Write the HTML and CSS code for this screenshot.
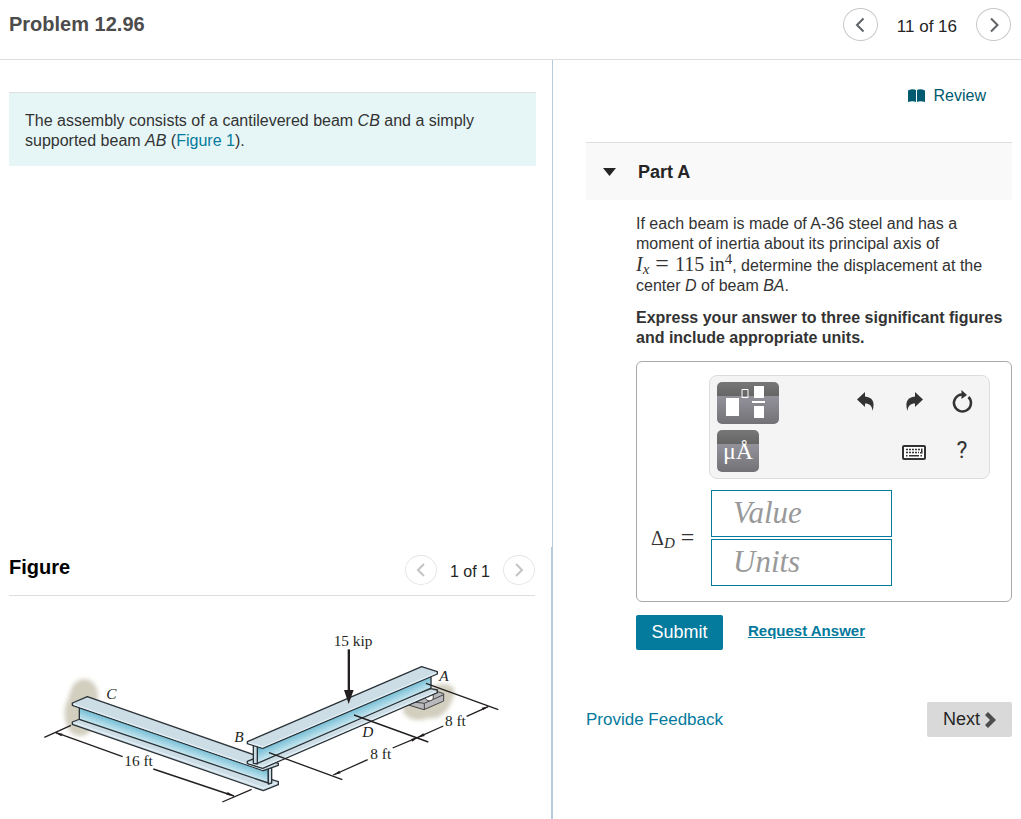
FILE: index.html
```html
<!DOCTYPE html>
<html lang="en">
<head>
  <meta charset="UTF-8" />
  <meta name="viewport" content="width=device-width, initial-scale=1.0" />
  <title>Problem 12.96</title>
  <link rel="stylesheet" href="styles.css">
</head>
<body>
  <header class="top-bar">
    <h1>Problem 12.96</h1>
    <nav class="pager">
      <button class="round-btn" aria-label="Previous problem">
        <svg width="12" height="16" viewBox="0 0 12 16"><path d="M9.5 1.5 3 8l6.500 6.500"/></svg>
      </button>
      <span>11 of 16</span>
      <button class="round-btn" aria-label="Next problem">
        <svg width="12" height="16" viewBox="0 0 12 16"><path d="M3 1.500 9.500 8 3 14.500"/></svg>
      </button>
    </nav>
  </header>

  <main class="columns">
    <section class="left">
      <p class="intro">The assembly consists of a cantilevered beam <i>CB</i> and a simply supported beam <i>AB</i> (<a href="#figure">Figure 1</a>).</p>

      <div class="figure-pane" id="figure">
        <div class="figure-head">
          <h2>Figure</h2>
          <div class="pager small">
            <button class="round-btn" aria-label="Previous figure" disabled>
              <svg width="12" height="16" viewBox="0 0 12 16"><path d="M9 2 3 8l6 6"/></svg>
            </button>
            <span>1 of 1</span>
            <button class="round-btn" aria-label="Next figure" disabled>
              <svg width="12" height="16" viewBox="0 0 12 16"><path d="M3 2l6 6-6 6"/></svg>
            </button>
          </div>
        </div>

        <svg class="drawing" viewBox="27 -72 1578 669" role="img" aria-label="Beams CB and AB">
          <defs>
            <linearGradient id="webCB" gradientUnits="userSpaceOnUse" x1="520" y1="350" x2="506" y2="392">
              <stop offset="0" stop-color="#5fb2cc"/>
              <stop offset="1" stop-color="#d3edf5"/>
            </linearGradient>
            <linearGradient id="webAB" gradientUnits="userSpaceOnUse" x1="1050" y1="264" x2="1068" y2="306">
              <stop offset="0" stop-color="#62b3cd"/>
              <stop offset="1" stop-color="#d3edf5"/>
            </linearGradient>
            <filter id="soft" x="-20%" y="-20%" width="140%" height="140%">
              <feGaussianBlur stdDeviation="6"/>
            </filter>
          </defs>

          <!-- wall at C and ground at A -->
          <path class="ground" filter="url(#soft)" d="M212 213c12-48 72-50 82 6l-2 40-22 75c-12 18-50 20-62-4-18-22-18-70-4-92z"/>
          <path class="ground" filter="url(#soft)" d="M1208 262l100-68c60-10 62 20 48 48-14 36-40 58-72 52-28 14-78 4-76-32z"/>

          <!-- beam CB -->
          <g class="beam">
            <path class="flange" d="M217 306l23-9 595 188v9l-45 18-573-199z"/>
            <path class="edge" d="M221 308l569 196 41-16"/>
            <path d="M238 258v40l567 191v-50z" fill="url(#webCB)"/>
            <path class="flange" d="M805 436v56l10-3v-60z"/>
            <path class="flange" d="M217 249l45-19 573 200v6l-45 16-573-196z"/>
            <path class="edge" d="M221 253l568 195"/>
          </g>

          <!-- support at A -->
          <g class="support">
            <path d="M1225 249l70-40 36 12v22l-59 26-47-14z"/>
            <path d="M1273 268v-18l58-26M1273 250l-46-6" fill="none"/>
            <path class="pin" d="M1276 235c5 10 20 10 24-1l-1-16-22 10z"/>
          </g>

          <!-- beam AB -->
          <g class="beam">
            <path class="flange" d="M742 424l20-8 530-210 20 4v8l-524 227-46-14z"/>
            <path class="edge" d="M746 427l42 13 520-225"/>
            <path d="M772 376v54l521-226v-40z" fill="url(#webAB)"/>
            <path class="flange" d="M760 372v58l12 2v-58z"/>
            <path class="flange" d="M742 365l523-225 47 15v7l-524 223-46-14z"/>
            <path class="edge" d="M746 368l42 13 520-222"/>
          </g>

          <!-- dimension lines -->
          <g class="dims">
            <path d="M213 316l-80 36M168 338l200 72M460 447l242 81M755 508l-88 38"/>
            <path d="M807 398l220 81M1062 285l223 81M1278 190l217 79"/>
            <path d="M1000 465l103-46M1178 384l74-31M1252 353l78-35M1400 289l65-29"/>
          </g>
          <g class="tips">
            <path d="M165 338l23 3-4 8zM704 529l-21-13-4 8zM998 466l20-14 4 8zM1254 352l-21 5 4 8zM1250 354l20-14 4 8zM1466 259l-21 4 4 8z"/>
            <path d="M1032 210h29l-15 42z"/>
            <path d="M1043 88h7v125h-7z"/>
          </g>

          <g class="labels">
            <text x="1001" y="77">15 kip</text>
            <text x="373" y="439">16 ft</text>
            <text x="1111" y="416">8 ft</text>
            <text x="1335" y="318">8 ft</text>
            <text class="pt" x="319" y="236">C</text>
            <text class="pt" x="703" y="367">B</text>
            <text class="pt" x="1087" y="352">D</text>
            <text class="pt" x="1318" y="184">A</text>
          </g>
        </svg>
      </div>
    </section>

    <section class="right">
      <a class="review" href="#">
        <svg width="17" height="14" viewBox="0 0 17 14"><path d="M0 1.500C3 0 6 0 8 1v12c-2-1-5-1-8 0zM9 1c2-1 5-1 8 .5V13c-3-1-6-1-8 0z"/></svg>
        Review
      </a>

      <button class="part-head" aria-expanded="true">
        <svg width="13" height="8" viewBox="0 0 13 8"><path d="M0 0h13L6.500 8z"/></svg>
        Part A
      </button>

      <div class="part-body">
        <p>If each beam is made of A-36 steel and has a moment of inertia about its principal axis of <span class="math"><i>I</i><sub><i>x</i></sub><span class="op">=</span>115 in<sup>4</sup></span>, determine the displacement at the center <i>D</i> of beam <i>BA</i>.</p>
        <p class="hint">Express your answer to three significant figures and include appropriate units.</p>

        <div class="answer-box">
          <div class="toolbar">
            <div class="tool-row">
              <button class="pad-btn wide" aria-label="Templates">
                <svg width="62" height="42" viewBox="0 0 62 42">
                  <path d="M9 16h13v18H9zM37 4h10v12H37zM37 24h10v12H37zM35 19h13v2H35z" fill="#fff"/>
                  <path d="M25 7.500h6v8h-6z" fill="none" stroke="#fff"/>
                </svg>
              </button>
              <div class="tool-icons">
                <button class="icon-btn" aria-label="Undo">
                  <svg width="24" height="24" viewBox="0 0 24 24"><path d="M3 9.500 11 2v4.500c7 .5 10.500 5 7.500 14.500-.5-5.500-3-7.500-7.500-7.500V17z"/></svg>
                </button>
                <button class="icon-btn" aria-label="Redo">
                  <svg width="24" height="24" viewBox="0 0 24 24"><path d="M21 9.500 13 2v4.500C6 7 2.500 11.500 5.500 21c.5-5.500 3-7.500 7.500-7.500V17z"/></svg>
                </button>
                <button class="icon-btn" aria-label="Reset">
                  <svg width="24" height="24" viewBox="0 0 24 24"><path d="M18.500 7a8.500 8.500 0 1 1-6.500-2.500" fill="none" stroke="#333" stroke-width="2.500"/><path d="M11.500 0 17 5l-5.500 4z"/></svg>
                </button>
              </div>
            </div>
            <div class="tool-row">
              <button class="pad-btn" aria-label="Units">μÅ</button>
              <div class="tool-icons">
                <button class="icon-btn" aria-label="Keyboard">
                  <svg width="24" height="24" viewBox="0 0 24 24">
                    <rect x="1" y="8" width="22" height="13" rx="1" fill="#fff" stroke="#333" stroke-width="2"/>
                    <path d="M4 11.500h15M4 14.500h13" fill="none" stroke="#333" stroke-width="1.500" stroke-dasharray="2 1"/>
                    <path d="M7 17h10v1.500H7zM4 17h1.500v1.500H4zM18.500 17H20v1.500h-1.500zM19 10.500h1.500v5H18V14h1z"/>
                  </svg>
                </button>
                <button class="icon-btn help" aria-label="Help">?</button>
              </div>
            </div>
          </div>

          <div class="entry">
            <label class="math" for="value">Δ<sub><i>D</i></sub><span class="op">=</span></label>
            <div class="fields">
              <input id="value" type="text" placeholder="Value" />
              <input id="units" type="text" placeholder="Units" aria-label="Units" />
            </div>
          </div>
        </div>

        <div class="actions">
          <button class="submit">Submit</button>
          <a href="#">Request Answer</a>
        </div>
      </div>

      <div class="bottom">
        <a href="#">Provide Feedback</a>
        <button class="next">Next
          <svg width="11" height="16" viewBox="0 0 11 16"><path d="M0 3 3 0l8 8-8 8-3-3 5-5z"/></svg>
        </button>
      </div>
    </section>
  </main>
</body>
</html>
```
FILE: styles.css
```css
* {
  box-sizing: border-box;
}
body {
  margin: 0;
  min-height: 100vh;
  display: flex;
  flex-direction: column;
  background: #fff;
  color: #333;
  font-family: "Liberation Sans", Arial, sans-serif;
  font-size: 16px;
  line-height: 20px;
}
h1, h2, p {
  margin: 0;
}
button {
  font-family: inherit;
  border: none;
  padding: 0;
  cursor: pointer;
}
a {
  color: #047a9c;
  text-decoration: none;
}

/* header */
.top-bar {
  display: flex;
  justify-content: space-between;
  align-items: center;
  padding: 8px 10px 18px 9px;
  border-bottom: 1px solid #dedede;
}
.top-bar h1 {
  padding-bottom: 2px;
  font-size: 20px;
  color: #4c4c4c;
}
.pager {
  display: flex;
  align-items: center;
  gap: 19px;
  font-size: 17px;
  color: #252525;
}
.pager span {
  padding-top: 4px;
}
.round-btn {
  display: flex;
  align-items: center;
  justify-content: center;
  width: 35px;
  height: 33px;
  background: #fff;
  border: 1px solid #c7c7c7;
  border-radius: 50%;
}
.round-btn path {
  fill: none;
  stroke: #5f6366;
  stroke-width: 2;
}
.pager.small {
  gap: 13px;
  font-size: 16px;
}
.small .round-btn {
  width: 32px;
  height: 30px;
  border-color: #e6e6e6;
}
.small .round-btn path {
  stroke: #c4c4c4;
}

/* two columns */
.columns {
  flex: 1;
  display: grid;
  grid-template-columns: 553fr 468fr;
}
.left {
  display: flex;
  flex-direction: column;
  justify-content: space-between;
  border-right: 1px solid #b8cbdc;
}
.intro {
  margin: 32px 16px 0 9px;
  padding: 18px 16px 15px;
  background: #e6f6f7;
  border-top: 1px solid #dbe0e0;
}
.figure-pane {
  padding: 0 16px 0 9px;
  border-right: 1px solid #b8cbdc;
}
.figure-head {
  display: flex;
  justify-content: space-between;
  padding: 8px 0 10px;
  border-bottom: 1px solid #dedede;
}
.figure-head h2 {
  font-size: 20px;
  line-height: 24px;
  color: #000;
}
.drawing {
  display: block;
  width: 100%;
}
.ground {
  fill: #d2cfbf;
}
.beam {
  stroke: #2b3338;
  stroke-width: 4;
  stroke-linejoin: round;
}
.flange {
  fill: #ccdde6;
}
.edge {
  fill: none;
  stroke: #e3eff5;
}
.support {
  fill: #b9b9bd;
  stroke: #444;
  stroke-width: 3;
}
.pin {
  fill: #fff;
}
.dims {
  fill: none;
  stroke: #231f20;
  stroke-width: 4;
}
.tips {
  fill: #231f20;
}
.labels {
  font-family: "Liberation Serif", serif;
  font-size: 46px;
  fill: #231f20;
}
.labels .pt {
  font-style: italic;
}

/* question side */
.right {
  display: flex;
  flex-direction: column;
  padding: 26px 9px 24px 33px;
}
.review {
  display: flex;
  align-items: center;
  align-self: flex-end;
  gap: 9px;
  margin-right: 26px;
  color: #005a70;
}
.review svg {
  fill: #005a70;
}
.part-head {
  display: flex;
  align-items: center;
  gap: 22px;
  margin-top: 36px;
  padding: 1px 17px 0;
  height: 58px;
  background: #f9f9f9;
  border-top: 1px solid #dedede;
  color: #252525;
  font-size: 18px;
  font-weight: bold;
}
.part-head svg {
  fill: #252525;
}
.part-body {
  padding: 14px 0 0 50px;
}
.math {
  font-family: "Liberation Serif", serif;
  font-size: 20px;
  white-space: nowrap;
}
.math sub, .math sup {
  font-size: 15px;
  line-height: 0;
}
.math sub {
  vertical-align: -3px;
}
.math sup {
  vertical-align: 7px;
}
.math .op {
  margin: 0 6px;
  font-size: 24px;
  line-height: 0;
}
.hint {
  margin-top: 12px;
  margin-right: -4px;
  font-weight: bold;
}
.answer-box {
  margin-top: 13px;
  padding: 13px 15px 15px 14px;
  border: 1px solid #a9a9a9;
  border-radius: 6px;
}
.toolbar {
  display: flex;
  flex-direction: column;
  gap: 6px;
  margin: 0 6px 0 58px;
  padding: 6px 7px;
  background: #f4f4f4;
  border: 1px solid #dcdcdc;
  border-radius: 8px;
}
.tool-row {
  display: flex;
  justify-content: space-between;
}
.pad-btn {
  width: 42px;
  height: 42px;
  border-radius: 5px;
  background: linear-gradient(#777, #666 33%, #93929b 34%, #727276);
  color: #fff;
  font-family: "Liberation Serif", serif;
  font-size: 24px;
}
.pad-btn.wide {
  width: 62px;
}
.tool-icons {
  display: flex;
  gap: 24px;
  padding: 8px;
}
.icon-btn {
  display: flex;
  align-items: center;
  justify-content: center;
  width: 24px;
  height: 24px;
  background: none;
  color: #333;
}
.icon-btn svg {
  fill: #333;
}
.help {
  font-family: Roboto, sans-serif;
  font-size: 23px;
}
.entry {
  display: flex;
  align-items: center;
  margin-top: 11px;
}
.entry label {
  width: 60px;
}
.fields {
  display: flex;
  flex-direction: column;
  gap: 2px;
}
.fields input {
  width: 181px;
  height: 47px;
  padding: 0 21px 2px;
  border: 1px solid #047a9c;
  font-family: "Liberation Serif", serif;
  font-size: 31px;
  font-style: italic;
}
.fields input::placeholder {
  color: #999;
}
.actions {
  display: flex;
  gap: 25px;
  margin-top: 13px;
}
.actions a {
  padding-top: 6px;
  font-size: 15px;
  font-weight: bold;
  text-decoration: underline;
}
.submit {
  width: 87px;
  height: 35px;
  border-radius: 2px;
  background: #047a9c;
  color: #fff;
  font-size: 18px;
}
.bottom {
  display: flex;
  justify-content: space-between;
  align-items: center;
  margin-top: 52px;
  font-size: 17px;
}
.next {
  display: flex;
  align-items: center;
  justify-content: center;
  gap: 5px;
  width: 85px;
  height: 35px;
  border-radius: 2px;
  background: #d9d9d9;
  color: #252525;
  font-size: 18px;
}
.next svg {
  fill: #4c4c4c;
}
```
